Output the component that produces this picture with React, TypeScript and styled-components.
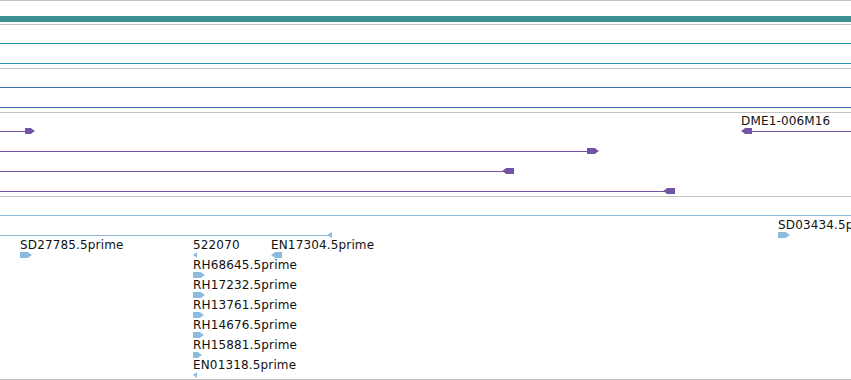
import React from "react";
import styled, { createGlobalStyle } from "styled-components";

const Global = createGlobalStyle`
  html, body { margin: 0; padding: 0; background: #fff; }
  body { font-family: "DejaVu Sans", "Liberation Sans", sans-serif; overflow: hidden; }
`;

const Page = styled.div`
  width: 851px;
  height: 380px;
  display: flex;
  flex-direction: column;
  border-top: 1px solid #c2c2c2;
  box-sizing: border-box;
  overflow: hidden;
`;

const Track = styled.div<{ $h: number; $pad: number }>`
  flex: none;
  display: flex;
  flex-direction: column;
  height: ${(p) => p.$h}px;
  padding-top: ${(p) => p.$pad}px;
  box-sizing: border-box;
  border-bottom: 1px solid #c2c2c2;
  overflow: hidden;
`;

const Band = styled.div<{ $color: string }>`
  flex: none;
  height: 6px;
  background: ${(p) => p.$color};
`;

const Row = styled.div`
  position: relative;
  flex: none;
  height: 20px;
`;

const Line = styled.div<{ $color: string }>`
  position: absolute;
  top: 10px;
  height: 1px;
  background: ${(p) => p.$color};
`;

const Glyph = styled.svg`
  position: absolute;
  top: 7px;
  overflow: visible;
`;

const Label = styled.span`
  position: absolute;
  top: -6px;
  font-family: "DejaVu Sans", "Liberation Sans", sans-serif;
  font-size: 12px;
  line-height: 12px;
  letter-spacing: 0.15px;
  color: #111;
  white-space: nowrap;
`;

type Feat = {
  x: number;
  w: number;
  dir: "r" | "l";
  label?: string;
  lineFrom?: number;
  lineTo?: number;
};

function Feature({ f, color }: { f: Feat; color: string }) {
  const w = f.w;
  const h = 6;
  const tip = Math.min(4, w);
  const pts =
    w <= 5
      ? f.dir === "r"
        ? `0,0 ${w},3 0,${h}`
        : `${w},0 0,3 ${w},${h}`
      : f.dir === "r"
      ? `0,0 ${w - tip},0 ${w - tip + 1},1 ${w},3 ${w - tip + 1},5 ${w - tip},${h} 0,${h}`
      : `${w},0 ${tip},0 ${tip - 1},1 0,3 ${tip - 1},5 ${tip},${h} ${w},${h}`;
  return (
    <>
      {f.lineTo !== undefined && (
        <Line
          $color={color}
          style={{ left: f.lineFrom ?? 0, width: f.lineTo - (f.lineFrom ?? 0) }}
        />
      )}
      <Glyph width={w} height={h} viewBox={`0 0 ${w} ${h}`} style={{ left: f.x }}>
        <polygon points={pts} fill={color} />
      </Glyph>
      {f.label && <Label style={{ left: f.x }}>{f.label}</Label>}
    </>
  );
}

const TEAL_BAND = "#3f9191";
const TEAL = "#2393ab";
const BLUE = "#3e6eb6";
const PURPLE = "#7353a5";
const LIGHT = "#8bbce0";

const FULL: Feat = { x: 0, w: 0, dir: "r", lineFrom: 0, lineTo: 851 };

const purpleRows: Feat[][] = [
  [
    { x: 25, w: 10, dir: "r", lineFrom: 0, lineTo: 26 },
    { x: 741, w: 11, dir: "l", label: "DME1-006M16", lineFrom: 750, lineTo: 851 },
  ],
  [{ x: 587, w: 12, dir: "r", lineFrom: 0, lineTo: 588 }],
  [{ x: 502, w: 12, dir: "l", lineFrom: 0, lineTo: 504 }],
  [{ x: 663, w: 12, dir: "l", lineFrom: 0, lineTo: 665 }],
];

const lightRows: Feat[][] = [
  [FULL],
  [
    { x: 327, w: 5, dir: "l", lineFrom: 0, lineTo: 330 },
    { x: 778, w: 12, dir: "r", label: "SD03434.5prime" },
  ],
  [
    { x: 20, w: 12, dir: "r", label: "SD27785.5prime" },
    { x: 193, w: 4, dir: "l", label: "522070" },
    { x: 271, w: 11, dir: "l", label: "EN17304.5prime" },
  ],
  [{ x: 193, w: 12, dir: "r", label: "RH68645.5prime" }],
  [{ x: 193, w: 12, dir: "r", label: "RH17232.5prime" }],
  [{ x: 193, w: 11, dir: "r", label: "RH13761.5prime" }],
  [{ x: 193, w: 11, dir: "r", label: "RH14676.5prime" }],
  [{ x: 193, w: 9, dir: "r", label: "RH15881.5prime" }],
  [{ x: 193, w: 4, dir: "l", label: "EN01318.5prime" }],
];

function LineRow({ color }: { color: string }) {
  return (
    <Row>
      <Line $color={color} style={{ left: 0, width: 851 }} />
    </Row>
  );
}

function FeatureRows({ rows, color }: { rows: Feat[][]; color: string }) {
  return (
    <>
      {rows.map((feats, r) => (
        <Row key={r}>
          {feats.map((f, i) =>
            f === FULL ? (
              <Line key={i} $color={color} style={{ left: 0, width: 851 }} />
            ) : (
              <Feature key={i} f={f} color={color} />
            )
          )}
        </Row>
      ))}
    </>
  );
}

export default function App() {
  return (
    <>
      <Global />
      <Page>
        <Track $h={24} $pad={15}>
          <Band $color={TEAL_BAND} />
        </Track>
        <Track $h={44} $pad={8}>
          <LineRow color={TEAL} />
          <LineRow color={TEAL} />
        </Track>
        <Track $h={44} $pad={8}>
          <LineRow color={BLUE} />
          <LineRow color={BLUE} />
        </Track>
        <Track $h={84} $pad={8}>
          <FeatureRows rows={purpleRows} color={PURPLE} />
        </Track>
        <Track $h={183} $pad={8}>
          <FeatureRows rows={lightRows} color={LIGHT} />
        </Track>
      </Page>
    </>
  );
}
